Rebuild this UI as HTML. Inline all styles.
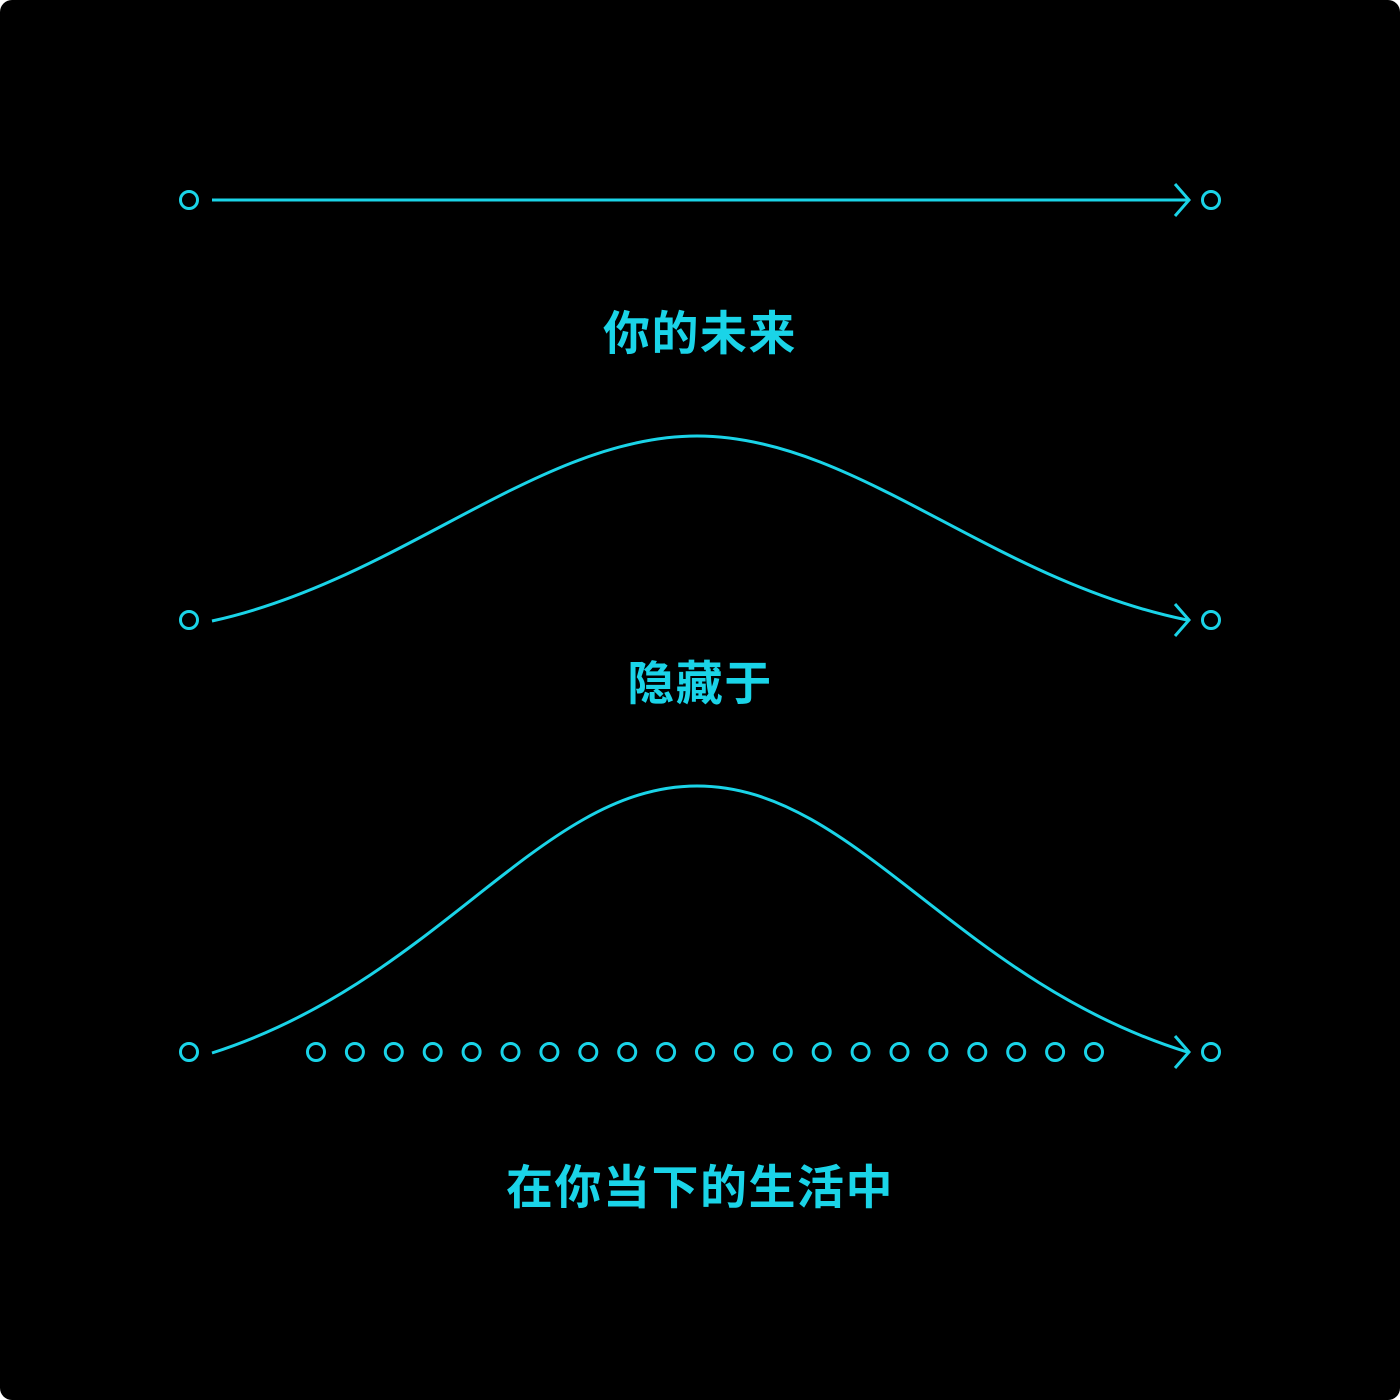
<!DOCTYPE html>
<html><head><meta charset="utf-8"><style>
html,body{margin:0;padding:0;background:#fff;}
.f{position:relative;width:1400px;height:1400px;background:#000;border-radius:12px;overflow:hidden;}
svg{position:absolute;left:0;top:0;}
.t{position:absolute;left:0;width:1400px;text-align:center;color:#1ad4e8;font-family:"Liberation Sans","Noto Sans CJK SC",sans-serif;font-weight:bold;font-size:47px;line-height:1;letter-spacing:1.5px;}
</style></head><body><div class="f">
<svg width="1400" height="1400" fill="none" stroke="#1ad4e8" stroke-width="3">
<circle cx="189" cy="200" r="8.5"/><circle cx="1211" cy="200" r="8.5"/>
<path d="M212 200H1187M1175 184L1189 200L1175 216"/>
<circle cx="189" cy="620" r="8.5"/><circle cx="1211" cy="620" r="8.5"/>
<path d="M212 621C400 580 540 436 697 436C855 436 990 580 1187 620M1175 604L1189 620L1175 636"/>
<circle cx="189" cy="1052" r="8.5"/><circle cx="1211" cy="1052" r="8.5"/>
<path d="M212 1053C440 980 540 786 697 786C855 786 955 980 1187 1052M1175 1036L1189 1052L1175 1068"/>
<g>
<circle cx="316" cy="1052" r="8.5"/><circle cx="354.9" cy="1052" r="8.5"/><circle cx="393.8" cy="1052" r="8.5"/><circle cx="432.7" cy="1052" r="8.5"/><circle cx="471.6" cy="1052" r="8.5"/><circle cx="510.5" cy="1052" r="8.5"/><circle cx="549.4" cy="1052" r="8.5"/><circle cx="588.3" cy="1052" r="8.5"/><circle cx="627.2" cy="1052" r="8.5"/><circle cx="666.1" cy="1052" r="8.5"/><circle cx="705" cy="1052" r="8.5"/><circle cx="743.9" cy="1052" r="8.5"/><circle cx="782.8" cy="1052" r="8.5"/><circle cx="821.7" cy="1052" r="8.5"/><circle cx="860.6" cy="1052" r="8.5"/><circle cx="899.5" cy="1052" r="8.5"/><circle cx="938.4" cy="1052" r="8.5"/><circle cx="977.3" cy="1052" r="8.5"/><circle cx="1016.2" cy="1052" r="8.5"/><circle cx="1055.1" cy="1052" r="8.5"/><circle cx="1094" cy="1052" r="8.5"/>
</g>
</svg>
<div class="t" style="top:310px">你的未来</div>
<div class="t" style="top:660px">隐藏于</div>
<div class="t" style="top:1164px">在你当下的生活中</div>
</div></body></html>
